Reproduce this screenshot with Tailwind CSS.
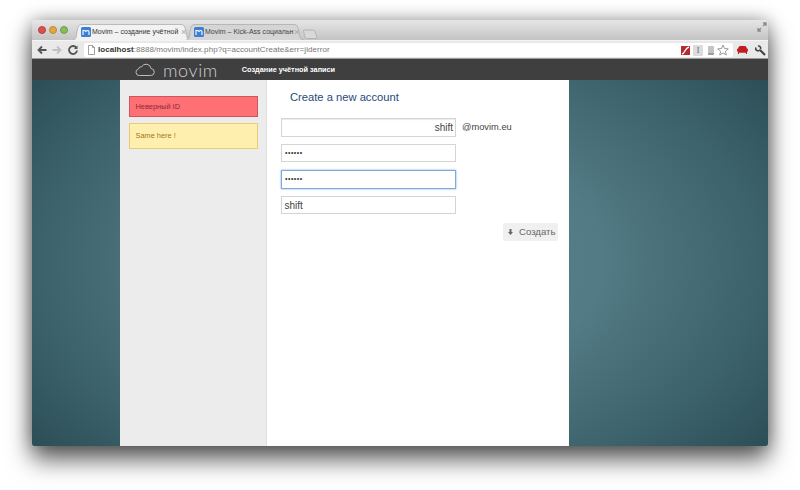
<!DOCTYPE html>
<html lang="en">
<head>
<meta charset="UTF-8">
<title>Movim</title>
<script src="https://cdn.jsdelivr.net/npm/@tailwindcss/browser@4"></script>
</head>
<body class="bg-white overflow-hidden font-['Liberation_Sans',sans-serif]">
<div class="w-[800px] h-[490px] pt-[20px] pl-[32px]">
  <div class="w-[736px] h-[426px] flex flex-col rounded-t-[4px] rounded-b-[2px] overflow-hidden shadow-[0_14px_24px_rgba(0,0,0,0.6),0_0_18px_rgba(0,0,0,0.35)]">

    <!-- tab strip -->
    <div class="h-[20px] shrink-0 flex items-end bg-gradient-to-b from-[#e6e6e6] to-[#c4c4c4] relative">
      <div class="flex gap-[3px] ml-[6px] self-center">
        <span class="w-[8px] h-[8px] rounded-full bg-[#dd4f4c] border border-[#b8413f]"></span>
        <span class="w-[8px] h-[8px] rounded-full bg-[#e0a844] border border-[#bd8a33]"></span>
        <span class="w-[8px] h-[8px] rounded-full bg-[#86bd5c] border border-[#6c9c48]"></span>
      </div>
      <!-- active tab -->
      <div class="relative ml-[5px] w-[118px] h-[16px] flex items-center pl-[8px] text-[7px] text-[#333] whitespace-nowrap">
        <svg class="absolute left-0 top-0" width="118" height="16" viewBox="0 0 118 16" fill="#f2f2f2" stroke="#a8a8a8" stroke-width="0.7"><path d="M0 16c3 0 3-2 4-8s2-7.500 5-7.500h99c3 0 4 2 5 7.500s1 8 5 8"/></svg>
        <svg class="relative shrink-0 mr-[1px]" width="10" height="10" viewBox="0 0 10 10"><rect width="10" height="10" rx="1.500" fill="#3f7fd0"/><path d="M2 8V3.500h1.200c.8 0 1.200.4 1.800 1 .5-.6 1-1 1.800-1 .8 0 1.200.6 1.200 1.500v3" fill="none" stroke="#fff" stroke-width="1.100"/></svg>
        <span class="relative w-[89px]">Movim – создание учётной</span>
        <span class="relative text-[#a8a8a8] text-[9px] leading-[9px]">×</span>
      </div>
      <!-- second tab -->
      <div class="relative -ml-[5px] w-[118px] h-[16px] flex items-center pl-[8px] text-[7px] text-[#444] whitespace-nowrap">
        <svg class="absolute left-0 top-0" width="118" height="16" viewBox="0 0 118 16" fill="#d5d5d5" stroke="#a8a8a8" stroke-width="0.7"><path d="M0 16c3 0 3-2 4-8s2-7.500 5-7.500h99c3 0 4 2 5 7.500s1 8 5 8"/></svg>
        <svg class="relative shrink-0 mr-[1px]" width="10" height="10" viewBox="0 0 10 10"><rect width="10" height="10" rx="1.500" fill="#3f7fd0"/><path d="M2 8V3.500h1.200c.8 0 1.200.4 1.800 1 .5-.6 1-1 1.800-1 .8 0 1.200.6 1.200 1.500v3" fill="none" stroke="#fff" stroke-width="1.100"/></svg>
        <span class="relative w-[89px]">Movim – Kick-Ass социальн</span>
        <span class="relative text-[#a8a8a8] text-[9px] leading-[9px]">×</span>
      </div>
      <svg class="-ml-[1px] mb-[1px]" width="15" height="10" viewBox="0 0 15 10" fill="#d8d8d8" stroke="#acacac" stroke-width="0.8"><path d="M1 1h9c1 0 1.500.5 2 1.500l2 6c.2.6-.2 1-.8 1H4c-1 0-1.500-.5-2-1.500L.5 2C.3 1.400.5 1 1 1z"/></svg>
      <svg class="absolute right-[1px] top-[2px]" width="10" height="10" viewBox="0 0 10 10" fill="none" stroke="#8a8a8a" stroke-width="1.300"><path d="M1 9l3-3M1 6v3h3M9 1L6 4M6 1h3v3"/></svg>
    </div>

    <!-- toolbar -->
    <div class="h-[19px] shrink-0 flex items-center pt-[1px] bg-[#e9e9e9] border-t border-[#f4f4f4] border-b-[#9a9a9a] border-b">
      <svg class="ml-[5px]" width="10" height="10" viewBox="0 0 10 10" fill="none" stroke="#555" stroke-width="1.800"><path d="M9.500 5H1.500M5 1.500L1.500 5 5 8.500"/></svg>
      <svg class="ml-[5px]" width="10" height="10" viewBox="0 0 10 10" fill="none" stroke="#c0c0c0" stroke-width="1.800"><path d="M.5 5h8M5 1.500L8.500 5 5 8.500"/></svg>
      <svg class="ml-[6px]" width="10" height="10" viewBox="0 0 10 10" fill="none" stroke="#555" stroke-width="1.800"><path d="M8.500 3A4 4 0 1 0 9 5.500"/><path d="M9.500 .5v3.500H6" fill="#555" stroke="none"/></svg>
      <div class="ml-[6px] w-[649px] h-[14px] bg-white rounded-[2px] flex items-center text-[8px] text-[#777] tracking-[0.06px] whitespace-nowrap">
        <svg class="ml-[4px] mr-[3px]" width="7" height="10" viewBox="0 0 7 10" fill="none" stroke="#888" stroke-width="0.8"><path d="M.5.5h4l2 2v7h-6zM4.500.5v2h2"/></svg>
        <span><span class="text-[#333] font-bold">localhost</span>:8888/movim/index.php?q=accountCreate&amp;err=jiderror</span>
        <div class="ml-auto flex items-center pr-[4px]">
          <svg width="9" height="9" viewBox="0 0 9 9"><rect width="9" height="9" fill="#b92a2a"/><path d="M1 8c3 0 2.500-6 7-7" fill="none" stroke="#fff" stroke-width="1.300"/></svg>
          <span class="ml-[3px] w-[10px] h-[11px] rounded-[1px] bg-[#dcdcdc] text-[#666] text-[8px] leading-[11px] text-center font-['Liberation_Serif',serif]">I</span>
          <span class="ml-[5px] w-[6px] h-[9px] rounded-[1px] bg-[#c4c4c4] border-b-2 border-[#9c9c9c]"></span>
          <svg class="ml-[3px]" width="12" height="12" viewBox="0 0 24 24" fill="#fff" stroke="#999" stroke-width="2"><path d="M12 2l3 7 7.500.7-5.700 5 1.700 7.300L12 18l-6.500 4 1.700-7.300-5.700-5L9 9z"/></svg>
        </div>
      </div>
      <svg class="ml-[4px]" width="11" height="8" viewBox="0 0 11 8" fill="#c01c22"><path d="M3 0h5c1 0 1.500 1 1.700 2.500.8 0 1.300.5 1.300 1.200 0 1-.5 2-1 2.300V8H9V6.800H2V8H1V6c-.5-.3-1-1.300-1-2.300C0 3 .5 2.500 1.300 2.500 1.500 1 2 0 3 0z"/></svg>
      <svg class="ml-[7px]" width="11" height="11" viewBox="0 0 11 11" fill="none" stroke="#444" stroke-width="2.200"><path d="M10 10L5 5"/><path d="M1 2.500a2.200 2.200 0 0 0 4 2M3 1a2.200 2.200 0 0 1 2.500 3" stroke-width="1.600"/></svg>
    </div>

    <!-- movim header -->
    <div class="h-[21px] shrink-0 bg-[#3f3f3f] flex items-center pl-[103px]">
      <svg width="20" height="13" viewBox="0 0 20 13" fill="none" stroke="#bdbdbd" stroke-width="1"><path d="M4.500 12.500h11a3.500 3.500 0 0 0 .5-7 5 5 0 0 0-9.300-1.800A3 3 0 0 0 3.500 6 3.300 3.300 0 0 0 4.500 12.500z"/></svg>
      <span class="ml-[8px] text-[18px] leading-[18px] font-light text-[#d0d0d0] font-['Lato',sans-serif] tracking-[0.6px]">movim</span>
      <span class="ml-[24px] mt-[2px] text-[7.300px] font-bold text-white">Создание учётной записи</span>
    </div>

    <!-- page -->
    <div class="flex-1 flex pl-[88px] bg-[radial-gradient(ellipse_480px_300px_at_368px_182px,#5a848e_0%,#527b85_42%,#486e77_58%,#3c626b_75%,#2b4d55_100%)]">
      <div class="w-[147px] bg-[#ececec] border-r border-[#e0e0e0] pt-[16px] pl-[9px]">
        <div class="w-[129px] h-[21px] bg-[#ff7074] border border-[#c9575c] flex items-center pl-[5.500px] text-[7.400px] text-[#8a2b35]">Неверный ID</div>
        <div class="w-[129px] h-[26px] mt-[6px] bg-[#ffefae] border border-[#e6cd72] flex items-center pl-[5.500px] text-[7.400px] text-[#a2761a]">Same here !</div>
      </div>
      <div class="w-[302px] bg-white pl-[14px] pr-[11px]">
        <h1 class="pl-[9px] pt-[10px] text-[11.200px] leading-[14px] text-[#264a78]">Create a new account</h1>
        <div class="mt-[14px] flex items-center">
          <div class="w-[175px] h-[19px] border border-[#d4d4d4] shadow-[inset_0_1px_1px_rgba(0,0,0,0.08)] flex items-center justify-end pr-[2px] text-[10px] text-[#444]">shift</div>
          <span class="ml-[6px] text-[9.300px] text-[#444]">@movim.eu</span>
        </div>
        <div class="mt-[7px] w-[175px] h-[18px] border border-[#d4d4d4] flex items-center pl-[3px] text-[7px] text-[#333] tracking-[0.5px]">••••••</div>
        <div class="mt-[8px] w-[175px] h-[19px] border border-[#7fa9d8] shadow-[0_0_2px_#7fa9d8] flex items-center pl-[3px] text-[7px] text-[#333] tracking-[0.5px]">••••••</div>
        <div class="mt-[7px] w-[175px] h-[18px] border border-[#d4d4d4] flex items-center pl-[2.500px] text-[10px] text-[#444]">shift</div>
        <div class="mt-[9px] flex justify-end">
          <div class="w-[55px] h-[18px] rounded-[2px] bg-[#f0f0f0] flex items-center pl-[5px] text-[9.600px] text-[#666]">
            <svg class="mr-[6px]" width="5" height="6" viewBox="0 0 5 6" fill="#666"><path d="M1.500 0h2v3H5L2.500 6 0 3h1.500z"/></svg>Создать
          </div>
        </div>
      </div>
    </div>
  </div>
</div>
</body>
</html>
